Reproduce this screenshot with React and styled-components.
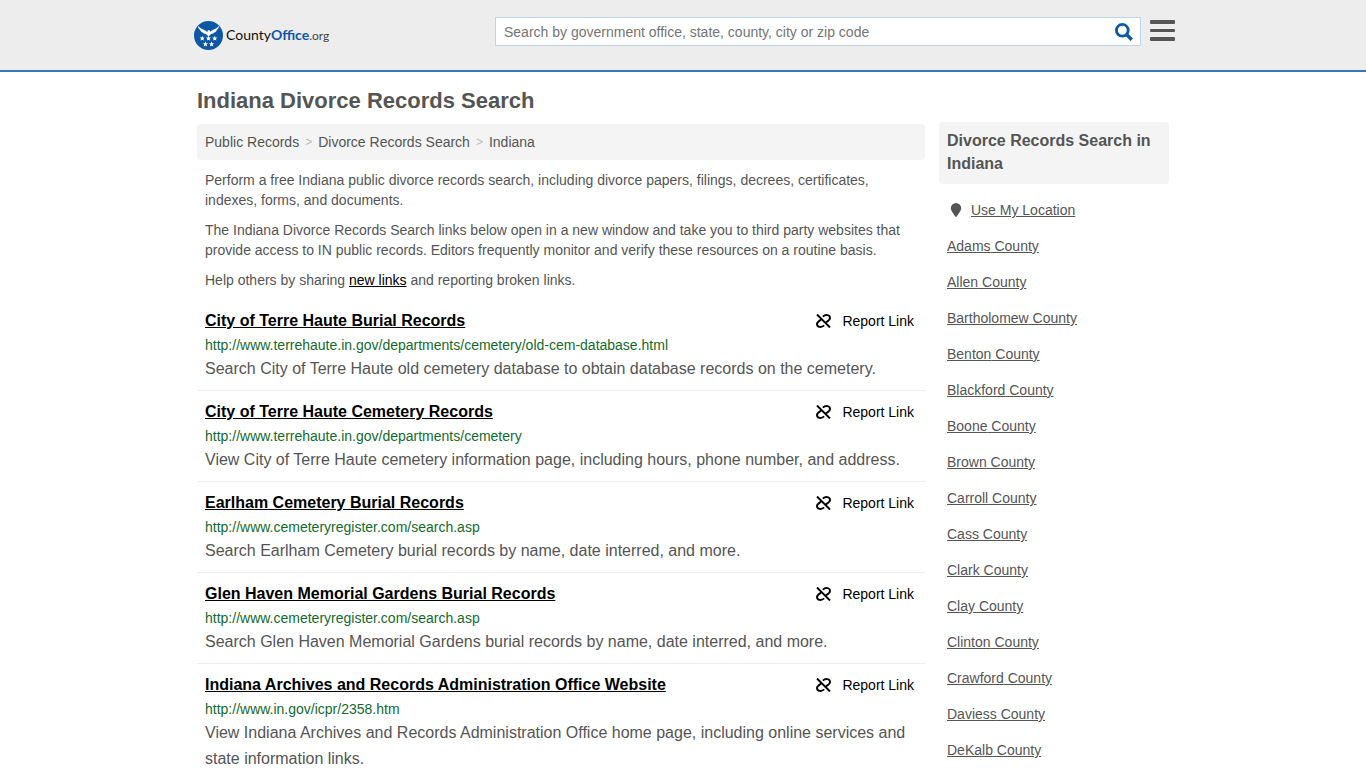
import styled, { createGlobalStyle } from "styled-components";

const GlobalStyle = createGlobalStyle`
  * {
    box-sizing: border-box;
  }
  body {
    margin: 0;
    background: #fff;
    color: #555;
    font-family: "Liberation Sans", Arial, sans-serif;
    font-size: 14px;
    line-height: 20px;
  }
`;

const Header = styled.header`
  background: #ededed;
  border-bottom: 2px solid #337ab7;
`;

const HeaderInner = styled.div`
  max-width: 1000px;
  height: 70px;
  margin: 0 auto;
  padding: 17px 0 0 11px;
  display: flex;
  align-items: flex-start;
`;

const Logo = styled.a`
  display: flex;
  align-items: center;
  gap: 3px;
  height: 36px;
  color: #111;
  font-family: Lato, sans-serif;
  font-size: 14px;
  text-decoration: none;
  b {
    color: #0d57a7;
  }
  small {
    font-size: 12px;
    color: #444;
  }
`;

const SearchForm = styled.form`
  flex: 0 1 646px;
  display: flex;
  height: 29px;
  margin-left: auto;
  background: #fff;
  border: 1px solid #bcd5ea;
`;

const SearchInput = styled.input`
  flex: 1;
  min-width: 0;
  padding: 0 8px;
  border: 0;
  outline: 0;
  background: none;
  font: inherit;
  color: #555;
  &::placeholder {
    color: #757575;
  }
`;

const IconButton = styled.button`
  display: flex;
  align-items: center;
  justify-content: center;
  width: ${(props) => props.$width};
  height: 27px;
  padding: 0;
  border: 0;
  background: none;
  color: ${(props) => props.$color};
  cursor: pointer;
`;

const Page = styled.div`
  max-width: 972px;
  margin: 0 auto;
  padding-top: 16px;
`;

const PageTitle = styled.h1`
  margin: 0;
  font-size: 22px;
  line-height: 26px;
`;

const Columns = styled.div`
  display: flex;
  align-items: flex-start;
  gap: 14px;
  padding-top: 8px;
`;

const Main = styled.main`
  flex: 1;
  min-width: 0;
  padding-top: 2px;
`;

const Breadcrumb = styled.nav`
  display: flex;
  gap: 6px;
  padding: 8px;
  background: #f4f4f4;
  border-radius: 4px;
  a {
    color: #555;
    text-decoration: none;
  }
  span {
    color: #bbb;
    font-size: 12px;
  }
`;

const Intro = styled.div`
  padding: 0 8px;
  p {
    margin: 10px 0;
  }
  a {
    color: #000;
  }
`;

const RecordList = styled.ul`
  margin: 0;
  padding: 0;
  list-style: none;
`;

const RecordItem = styled.li`
  padding: 8px;
  border-bottom: 1px solid #eee;
`;

const RecordTop = styled.div`
  display: flex;
  justify-content: space-between;
  line-height: 26px;
`;

const RecordTitle = styled.a`
  color: #000;
  font-size: 16px;
  font-weight: bold;
`;

const ReportLink = styled.button`
  display: flex;
  align-items: center;
  gap: 11px;
  padding: 0 3px 0 0;
  border: 0;
  background: none;
  color: #000;
  font: inherit;
  cursor: pointer;
`;

const RecordUrl = styled.div`
  color: #136b2d;
  line-height: 22px;
`;

const RecordText = styled.div`
  font-size: 16px;
  line-height: 26px;
`;

const Sidebar = styled.aside`
  flex: 0 0 230px;
`;

const SidebarTitle = styled.h2`
  margin: 0 0 8px;
  padding: 7px 8px 9px;
  background: #f4f4f4;
  border-radius: 4px;
  font-size: 16px;
  line-height: 23px;
`;

const CountyList = styled.ul`
  margin: 0;
  padding: 0;
  list-style: none;
`;

const CountyItem = styled.li`
  display: flex;
  align-items: center;
  gap: 6px;
  padding: 8px;
  a {
    color: #555;
  }
`;

const records = [
  {
    title: "City of Terre Haute Burial Records",
    url: "http://www.terrehaute.in.gov/departments/cemetery/old-cem-database.html",
    text: "Search City of Terre Haute old cemetery database to obtain database records on the cemetery.",
  },
  {
    title: "City of Terre Haute Cemetery Records",
    url: "http://www.terrehaute.in.gov/departments/cemetery",
    text: "View City of Terre Haute cemetery information page, including hours, phone number, and address.",
  },
  {
    title: "Earlham Cemetery Burial Records",
    url: "http://www.cemeteryregister.com/search.asp",
    text: "Search Earlham Cemetery burial records by name, date interred, and more.",
  },
  {
    title: "Glen Haven Memorial Gardens Burial Records",
    url: "http://www.cemeteryregister.com/search.asp",
    text: "Search Glen Haven Memorial Gardens burial records by name, date interred, and more.",
  },
  {
    title: "Indiana Archives and Records Administration Office Website",
    url: "http://www.in.gov/icpr/2358.htm",
    text: "View Indiana Archives and Records Administration Office home page, including online services and state information links.",
  },
];

const counties = [
  "Adams",
  "Allen",
  "Bartholomew",
  "Benton",
  "Blackford",
  "Boone",
  "Brown",
  "Carroll",
  "Cass",
  "Clark",
  "Clay",
  "Clinton",
  "Crawford",
  "Daviess",
  "DeKalb",
];

const star = "M0-2.8.8-1 2.7-.9 1.2.4 1.7 2.3 0 1.3-1.7 2.3-1.2.4-2.7-.9-.8-1Z";
const stars = [
  [8.5, 18],
  [15, 18],
  [21.5, 18],
  [11.8, 24],
  [18.2, 24],
];

function LogoMark() {
  return (
    <svg width="29" height="29" viewBox="0 0 30 30" fill="#fff" aria-hidden="true">
      <circle cx="15" cy="15" r="15" fill="#0d57a7" />
      <path d="M4 5c2 2.500 4.500 3.500 7 4.500 1.500.6 2.300 1.500 2.700 2.500l.3-2 1.500-.6 1.200.9-.4 1.700c.4-1 1.200-1.900 2.700-2.500 2.500-1 5-2 7-4.500-.2 2-1 3.300-2.300 4.300-.4 1.300-1.400 2.200-2.700 2.600-.9 1-2 1.500-3.300 1.500L15 16l-2.700-2.600c-1.300 0-2.400-.5-3.300-1.500-1.300-.4-2.300-1.300-2.700-2.600C5 8.300 4.200 7 4 5Z" />
      {stars.map(([x, y]) => (
        <path key={`${x}-${y}`} d={star} transform={`translate(${x} ${y})`} />
      ))}
    </svg>
  );
}

function SearchIcon() {
  return (
    <svg width="18" height="18" viewBox="0 0 18 18" fill="none" stroke="currentColor" aria-hidden="true">
      <circle cx="7.3" cy="7.3" r="5.9" strokeWidth="2.8" />
      <path d="m11.8 11.8 5 5" strokeWidth="3.4" />
    </svg>
  );
}

function MenuIcon() {
  return (
    <svg width="25" height="22" viewBox="0 0 25 22" fill="currentColor" aria-hidden="true">
      <rect width="25" height="4" rx="1" />
      <rect y="9" width="25" height="3" rx="1" />
      <rect y="17" width="25" height="4" rx="1" />
    </svg>
  );
}

function BrokenLinkIcon() {
  return (
    <svg width="15" height="14" viewBox="0 0 15 14" fill="none" stroke="currentColor" strokeWidth="1.9" aria-hidden="true">
      <path d="m1 .5 13 13" />
      <path d="M6.800 2.600C9.500.2 14 .6 14 4c0 2-2 3-4.200 4.500" />
      <path d="M8.200 11.400C5.500 13.800 1 13.400 1 10c0-2 2-3 4.200-4.500" />
    </svg>
  );
}

function PinIcon() {
  return (
    <svg width="18" height="14" viewBox="0 0 18 14" fill="currentColor" aria-hidden="true">
      <path d="M9 0a5.200 5.200 0 0 1 5.200 5.200c0 2.600-3.200 6-4.500 8.300a.8.8 0 0 1-1.400 0C7 11.200 3.800 7.800 3.800 5.200A5.200 5.200 0 0 1 9 0Z" />
    </svg>
  );
}

export default function App() {
  return (
    <>
      <GlobalStyle />
      <Header>
        <HeaderInner>
          <Logo href="#">
            <LogoMark />
            <span>
              County<b>Office</b>
              <small>.org</small>
            </span>
          </Logo>
          <SearchForm>
            <SearchInput
              type="text"
              aria-label="Search"
              placeholder="Search by government office, state, county, city or zip code"
            />
            <IconButton type="submit" aria-label="Search" $width="32px" $color="#0d57a7">
              <SearchIcon />
            </IconButton>
          </SearchForm>
          <IconButton type="button" aria-label="Menu" $width="42px" $color="#555">
            <MenuIcon />
          </IconButton>
        </HeaderInner>
      </Header>
      <Page>
        <PageTitle>Indiana Divorce Records Search</PageTitle>
        <Columns>
          <Main>
            <Breadcrumb>
              <a href="#">Public Records</a>
              <span>&gt;</span>
              <a href="#">Divorce Records Search</a>
              <span>&gt;</span>
              <a href="#">Indiana</a>
            </Breadcrumb>
            <Intro>
              <p>
                Perform a free Indiana public divorce records search, including divorce papers, filings, decrees,
                certificates, indexes, forms, and documents.
              </p>
              <p>
                The Indiana Divorce Records Search links below open in a new window and take you to third party
                websites that provide access to IN public records. Editors frequently monitor and verify these
                resources on a routine basis.
              </p>
              <p>
                Help others by sharing <a href="#">new links</a> and reporting broken links.
              </p>
            </Intro>
            <RecordList>
              {records.map((record) => (
                <RecordItem key={record.title}>
                  <RecordTop>
                    <RecordTitle href="#">{record.title}</RecordTitle>
                    <ReportLink type="button">
                      <BrokenLinkIcon />
                      Report Link
                    </ReportLink>
                  </RecordTop>
                  <RecordUrl>{record.url}</RecordUrl>
                  <RecordText>{record.text}</RecordText>
                </RecordItem>
              ))}
            </RecordList>
          </Main>
          <Sidebar>
            <SidebarTitle>Divorce Records Search in Indiana</SidebarTitle>
            <CountyList>
              <CountyItem>
                <PinIcon />
                <a href="#">Use My Location</a>
              </CountyItem>
              {counties.map((county) => (
                <CountyItem key={county}>
                  <a href="#">{county} County</a>
                </CountyItem>
              ))}
            </CountyList>
          </Sidebar>
        </Columns>
      </Page>
    </>
  );
}
